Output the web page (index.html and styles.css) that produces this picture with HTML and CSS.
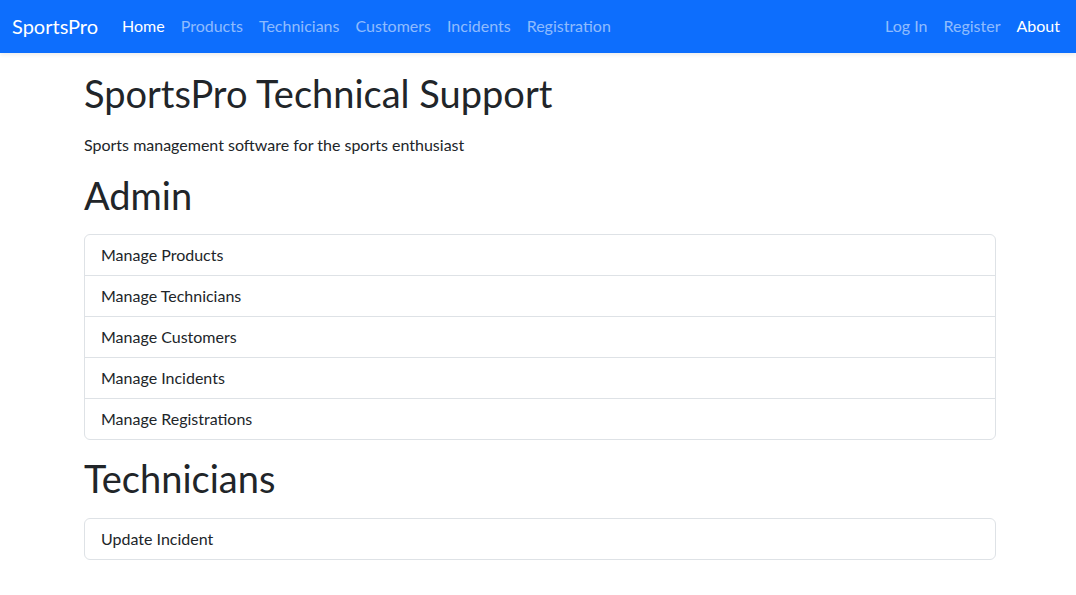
FILE: index.html
```html
<!DOCTYPE html>
<html lang="en">
<head>
<meta charset="utf-8">
<title>SportsPro</title>
<link rel="stylesheet" href="styles.css">
</head>
<body>
<nav class="navbar">
  <a class="brand" href="#">SportsPro</a>
  <ul class="nav">
    <li><a class="active" href="#">Home</a></li>
    <li><a href="#">Products</a></li>
    <li><a href="#">Technicians</a></li>
    <li><a href="#">Customers</a></li>
    <li><a href="#">Incidents</a></li>
    <li><a href="#">Registration</a></li>
  </ul>
  <ul class="nav nav-right">
    <li><a href="#">Log In</a></li>
    <li><a href="#">Register</a></li>
    <li><a class="active" href="#">About</a></li>
  </ul>
</nav>
<main class="container">
  <h1>SportsPro Technical Support</h1>
  <p class="lead">Sports management software for the sports enthusiast</p>
  <h1>Admin</h1>
  <div class="list-group">
    <a href="#" class="item">Manage Products</a>
    <a href="#" class="item">Manage Technicians</a>
    <a href="#" class="item">Manage Customers</a>
    <a href="#" class="item">Manage Incidents</a>
    <a href="#" class="item">Manage Registrations</a>
  </div>
  <h1>Technicians</h1>
  <div class="list-group">
    <a href="#" class="item">Update Incident</a>
  </div>
</main>
</body>
</html>
```
FILE: styles.css
```css
* { box-sizing: border-box; }
body {
  margin: 0;
  font-family: Lato, "Noto Sans", sans-serif;
  font-size: 16px;
  line-height: 1.5;
  color: #212529;
  background: #fff;
}
a { text-decoration: none; }
.navbar {
  display: flex;
  align-items: center;
  height: 53px;
  padding: 0 8px 0 12px;
  background: #0d6efd;
  box-shadow: 0 2px 4px rgba(0,0,0,0.075);
}
.brand {
  color: #fff;
  font-size: 20px;
  line-height: 30px;
  padding-bottom: 2px;
  margin-right: 16px;
}
.nav {
  display: flex;
  list-style: none;
  margin: 0;
  padding: 0;
}
.nav a {
  display: block;
  padding: 7px 8px 9px;
  color: rgba(255,255,255,0.55);
}
.nav a.active { color: #fff; }
.nav-right { margin-left: auto; }
.container {
  width: 912px;
  margin: 0 0 0 84px;
  padding-top: 18px;
}
h1 {
  font-size: 38px;
  font-weight: 400;
  line-height: 45.6px;
  margin: 0 0 16px;
}
.lead { margin: 0 0 16px; }
.list-group {
  border: 1px solid #dee2e6;
  border-radius: 6px;
  margin-bottom: 16px;
}
.item {
  display: block;
  padding: 8px 16px;
  color: #212529;
  border-top: 1px solid #dee2e6;
}
.item:first-child { border-top: 0; }
```
